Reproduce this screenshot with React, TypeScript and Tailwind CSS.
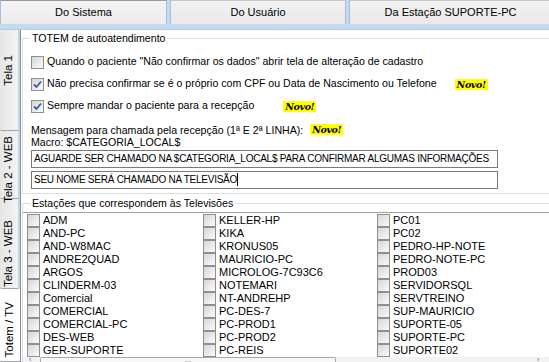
import React from "react"

const FONT = "font-['Liberation_Sans',Arial,sans-serif]"

const STATIONS = [
    'ADM', 'AND-PC', 'AND-W8MAC', 'ANDRE2QUAD', 'ARGOS', 'CLINDERM-03', 'Comercial', 'COMERCIAL', 'COMERCIAL-PC', 'DES-WEB', 'GER-SUPORTE',
    'KELLER-HP', 'KIKA', 'KRONUS05', 'MAURICIO-PC', 'MICROLOG-7C93C6', 'NOTEMARI', 'NT-ANDREHP', 'PC-DES-7', 'PC-PROD1', 'PC-PROD2', 'PC-REIS',
    'PC01', 'PC02', 'PEDRO-HP-NOTE', 'PEDRO-NOTE-PC', 'PROD03', 'SERVIDORSQL', 'SERVTREINO', 'SUP-MAURICIO', 'SUPORTE-05', 'SUPORTE-PC', 'SUPORTE02',
]

function Check({ checked }: { checked?: boolean }) {
    return (
        <span className="w-[13px] h-[13px] shrink-0 border border-[#8f8f8f] bg-gradient-to-br from-[#d6d6d6] to-[#fbfbfb] flex items-center justify-center">
            {checked && (
                <svg width="9" height="9" viewBox="0 0 9 9">
                    <path d="M1 4.5 L3.5 7 L8 1.5" fill="none" stroke="#3c5aa8" strokeWidth="1.8" />
                </svg>
            )}
        </span>
    )
}

function Novo() {
    return (
        <span className="bg-[#ffff00] px-[2px] h-[11px] flex items-center text-[9.5px] font-bold italic font-['DejaVu_Serif',serif] tracking-[-0.4px] leading-none">
            Novo!
        </span>
    )
}

function TopTab({ label, active }: { label: string, active?: boolean }) {
    return (
        <div className={`h-[24px] flex items-center justify-center border-x border-[#a7bfdc] ${active ? 'bg-gradient-to-b from-[#f4f4f4] to-[#ececec] border-t border-t-[#9a9a9a]' : 'bg-gradient-to-b from-[#f2f2f2] to-[#e9e9e9] border-t border-t-[#c9c9c9]'}`}>
            {label}
        </div>
    )
}

function SideTab({ label, h, pt, active }: { label: string, h: string, pt: string, active?: boolean }) {
    return (
        <div className={`${h} ${pt} shrink-0 flex flex-col items-center border-b border-[#9aa6b4] rounded-l-[2px] ${active ? 'bg-white' : 'bg-gradient-to-r from-[#e6e6e6] to-[#f3f3f3] border-r-2 border-r-[#c3d5ee]'}`}>
            <span className="[writing-mode:vertical-rl] rotate-180 whitespace-nowrap text-[11.5px]">{label}</span>
        </div>
    )
}

export default function App() {
    return (
        <div className={`w-[549px] h-[362px] overflow-hidden bg-white text-[10.6px] text-black ${FONT} flex flex-col`}>
            <div className="grid grid-cols-[167px_176px_203px] gap-[3px] bg-[#c7d9ef] text-[11px]">
                <TopTab label="Do Sistema" active />
                <TopTab label="Do Usuário" />
                <TopTab label="Da Estação SUPORTE-PC" />
            </div>
            <div className="h-[6px] bg-[#c7d9ef] border-b border-[#b3c9e6]" />

            <div className="flex flex-1 min-h-0">
                <div className="w-[21px] shrink-0 flex flex-col bg-[#f0f0f0] border-r border-[#8c8c8c]">
                    <SideTab label="Tela 1" h="h-[101px]" pt="pt-[25px]" />
                    <SideTab label="Tela 2 - WEB" h="h-[68px]" pt="pt-[5px]" />
                    <SideTab label="Tela 3 - WEB" h="h-[90px]" pt="pt-[21px]" />
                    <SideTab label="Totem / TV" h="flex-1" pt="pt-[13px]" active />
                </div>

                <div className="flex-1 min-w-0 flex flex-col pl-[1px]">
                    <fieldset className="border border-[#d5dfe5] border-r-0 mt-[1px] h-[163px] shrink-0 pl-[8px]">
                        <legend className="px-[2px] -ml-[1px]">TOTEM de autoatendimento</legend>
                        <div className="flex flex-col gap-[9px] mt-[9px]">
                            <div className="flex items-center gap-[3px] h-[13px]">
                                <Check />
                                <span>Quando o paciente "Não confirmar os dados" abrir tela de alteração de cadastro</span>
                            </div>
                            <div className="flex items-center gap-[3px] h-[13px]">
                                <Check checked />
                                <span>Não precisa confirmar se é o próprio com CPF ou Data de Nascimento ou Telefone</span>
                                <span className="ml-[15px]"><Novo /></span>
                            </div>
                            <div className="flex items-center gap-[3px] h-[13px]">
                                <Check checked />
                                <span>Sempre mandar o paciente para a recepção</span>
                                <span className="ml-[26px]"><Novo /></span>
                            </div>
                        </div>
                        <div className="mt-[11px] flex items-center leading-[12px]">
                            <span>Mensagem para chamada pela recepção (1ª E 2ª LINHA):</span>
                            <span className="ml-[7px]"><Novo /></span>
                        </div>
                        <div className="leading-[12px]">Macro: $CATEGORIA_LOCAL$</div>
                        <div className="w-[467px] h-[18px] mt-[2px] border border-[#7a7a7a] px-[2px] flex items-center whitespace-nowrap overflow-hidden text-[10px] tracking-[-0.25px]">
                            AGUARDE SER CHAMADO NA $CATEGORIA_LOCAL$ PARA CONFIRMAR ALGUMAS INFORMAÇÕES
                        </div>
                        <div className="w-[467px] h-[18px] mt-[3px] border border-[#7a7a7a] px-[2px] flex items-center whitespace-nowrap text-[10px] tracking-[-0.25px]">
                            SEU NOME SERÁ CHAMADO NA TELEVISÃO<span className="w-px h-[13px] bg-black" />
                        </div>
                    </fieldset>

                    <fieldset className="border-t border-l border-[#d5dfe5] mt-[2px] flex-1 min-h-0 flex flex-col">
                        <legend className="px-[2px] ml-[7px]">Estações que correspondem às Televisões</legend>
                        <div className="flex-1 min-h-0 border-t border-[#a0a0a0] flex flex-col">
                            <div className="grid grid-flow-col grid-rows-[repeat(11,13px)] grid-cols-[176px_174px_160px] pl-[4px] pt-[1px] text-[11px]">
                                {STATIONS.map((s) => (
                                    <div key={s} className="flex items-center gap-[3px]">
                                        <Check />
                                        <span>{s}</span>
                                    </div>
                                ))}
                            </div>
                            <div className="mt-auto h-[6px] flex items-start bg-[#f3f3f3] overflow-hidden">
                                <span className="w-[17px] text-[7px] leading-[6px] text-[#606060] pl-[6px]">‹</span>
                                <div className="w-[296px] h-[6px] border border-b-0 border-[#a9a9a9] rounded-t-[2px] bg-[#f8f8f8] flex justify-center text-[7px] leading-[4px] text-[#555]">
                                    ...
                                </div>
                                <span className="ml-auto w-[12px] text-[7px] leading-[6px] text-[#606060]">›</span>
                            </div>
                        </div>
                    </fieldset>
                </div>
            </div>
        </div>
    )
}
